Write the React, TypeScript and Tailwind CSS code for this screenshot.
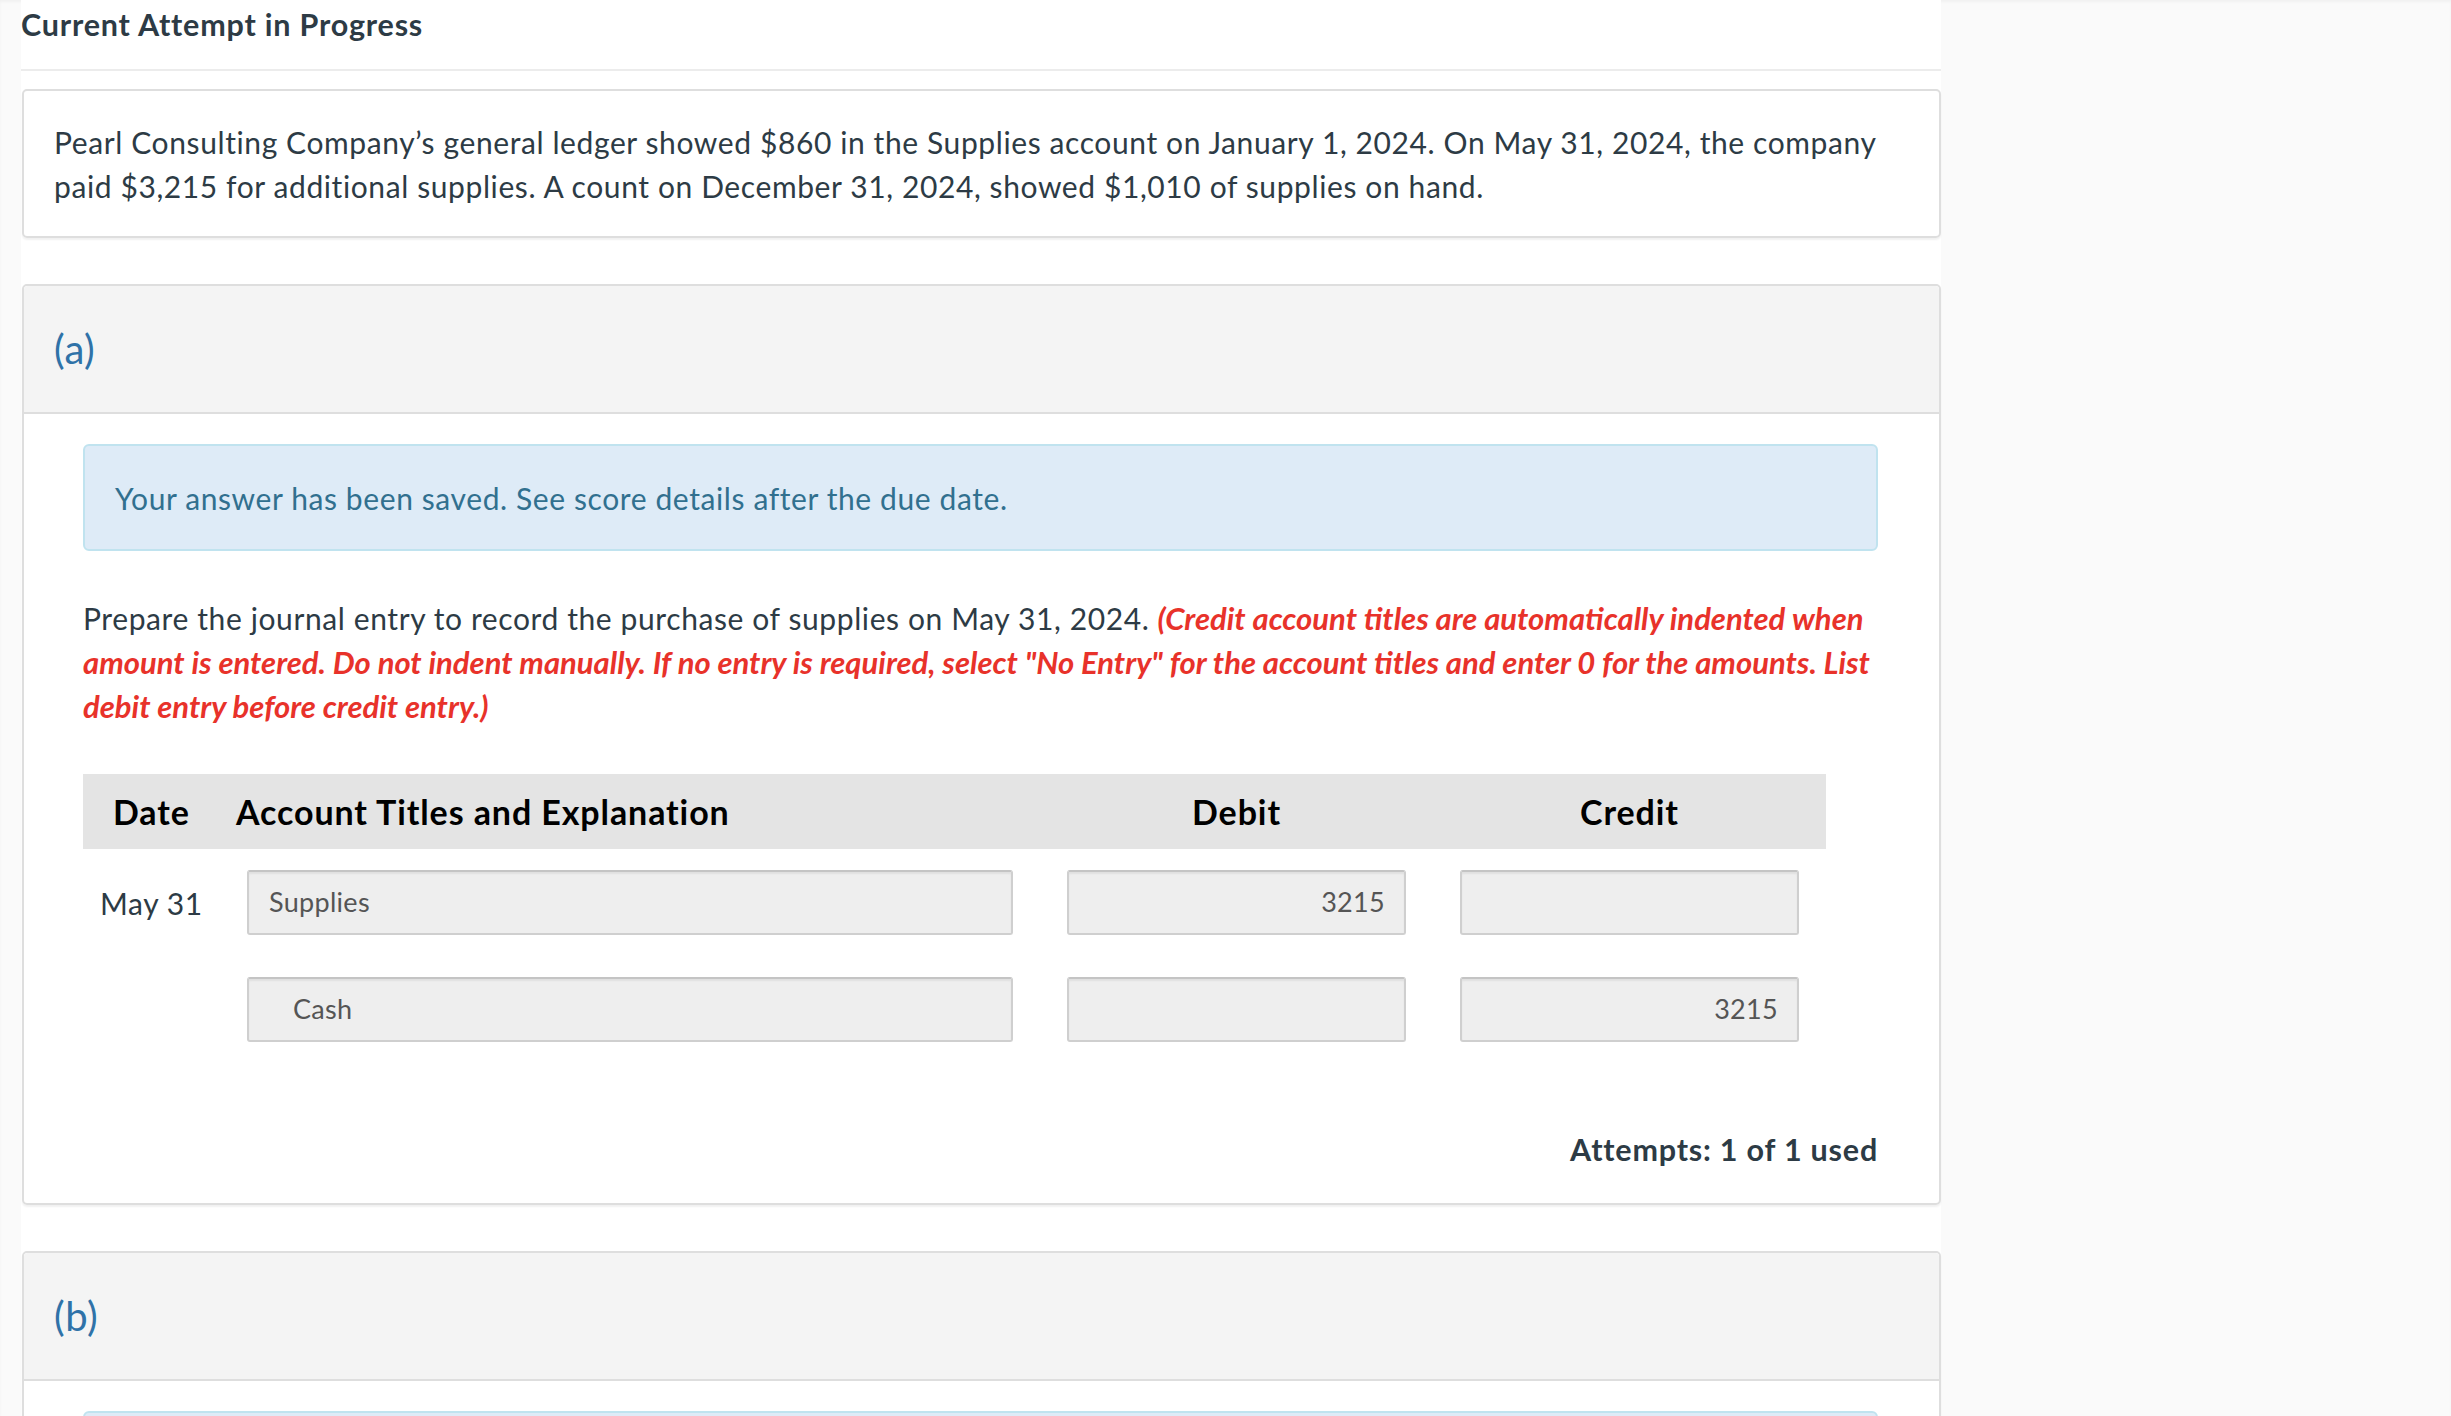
import React from "react";

function Input({ value, align = "left", indent = false, w }: { value: string; align?: "left" | "right"; indent?: boolean; w: string }) {
  return (
    <div
      className={`${w} h-[65px] shrink-0 flex items-center bg-[#eeeeee] border-2 border-[#cfcfcf] border-t-[#c4c4c4] rounded-[3px] shadow-[inset_0_2px_2px_rgba(0,0,0,0.06)] text-[27px] tracking-[0.3px] text-[#555555] ${
        align === "right" ? "justify-end pr-[19px]" : indent ? "pl-[44px]" : "pl-[20px]"
      }`}
    >
      {value}
    </div>
  );
}

function SectionHeader({ label }: { label: string }) {
  return (
    <div className="h-[128px] bg-[#f4f4f4] border-b-2 border-[#dedede] flex items-center pl-[30px] rounded-t-[4px]">
      <span className="text-[40px] tracking-[0.5px] leading-none text-[#2f72a8]">{label}</span>
    </div>
  );
}

const body = "text-[30px] tracking-[0.6px] leading-[44px]";
const red = "font-bold italic text-[#e8322a] text-[31px] tracking-[0px]";

export default function App() {
  return (
    <div className="min-h-screen bg-[#fafafa] font-[family-name:Lato,sans-serif] shadow-[inset_0_2px_3px_rgba(0,0,0,0.04)]">
      <div className="ml-[21px] w-[1920px] bg-white min-h-screen pb-[60px]">
        {/* Heading */}
        <div className="pt-[2px] pb-[23px] border-b-2 border-[#ececec]">
          <h1 className="text-[30.5px] tracking-[0.8px] leading-[44px] font-bold text-[#2d3b45]">Current Attempt in Progress</h1>
        </div>

        {/* Problem statement */}
        <div className="mt-[18px] ml-[1px] border-2 border-[#dedede] rounded-[5px] shadow-[0_2px_2px_rgba(0,0,0,0.06)] pt-[29px] pb-[28px] px-[30px]">
          <p className={`${body} text-[#2d3b45]`}>
            <span className="block whitespace-nowrap">
              Pearl Consulting Company’s general ledger showed $860 in the Supplies account on January 1, 2024. On May 31, 2024, the company
            </span>
            <span className="block whitespace-nowrap">
              paid $3,215 for additional supplies. A count on December 31, 2024, showed $1,010 of supplies on hand.
            </span>
          </p>
        </div>

        {/* Section (a) */}
        <section className="mt-[46px] ml-[1px] border-2 border-[#dedede] rounded-[5px] shadow-[0_2px_2px_rgba(0,0,0,0.06)]">
          <SectionHeader label="(a)" />
          <div className="pt-[30px] pb-[32px] pl-[59px] pr-[61px]">
            <div className="h-[107px] flex items-center pl-[30px] bg-[#deebf7] border-2 border-[#c0e3ef] rounded-[6px]">
              <span className={`${body} text-[#31708f]`}>Your answer has been saved. See score details after the due date.</span>
            </div>

            <p className={`mt-[45px] ${body} text-[#2d3b45]`}>
              <span className="block whitespace-nowrap">
                Prepare the journal entry to record the purchase of supplies on May 31, 2024.{" "}
                <span className={red}>(Credit account titles are automatically indented when</span>
              </span>
              <span className={`block whitespace-nowrap ${red}`}>
                amount is entered. Do not indent manually. If no entry is required, select "No Entry" for the account titles and enter 0 for the amounts. List
              </span>
              <span className={`block whitespace-nowrap ${red}`}>debit entry before credit entry.)</span>
            </p>

            {/* Table */}
            <div className="mt-[46px] w-[1743px]">
              <div className="h-[75px] bg-[#e4e4e4] flex items-center text-[34px] tracking-[0.9px] font-bold text-black">
                <div className="w-[153px] pl-[30px] shrink-0">Date</div>
                <div className="w-[814px] shrink-0 whitespace-nowrap">Account Titles and Explanation</div>
                <div className="w-[373px] shrink-0 text-center">Debit</div>
                <div className="w-[20px] shrink-0" />
                <div className="w-[373px] shrink-0 text-center">Credit</div>
              </div>

              <div className="mt-[21px] flex items-center">
                <div className={`w-[164px] shrink-0 pl-[17px] ${body} text-[#2d3b45]`}>May 31</div>
                <Input w="w-[766px]" value="Supplies" />
                <div className="w-[54px] shrink-0" />
                <Input w="w-[339px]" value="3215" align="right" />
                <div className="w-[54px] shrink-0" />
                <Input w="w-[339px]" value="" />
              </div>

              <div className="mt-[42px] flex items-center">
                <div className="w-[164px] shrink-0" />
                <Input w="w-[766px]" value="Cash" indent />
                <div className="w-[54px] shrink-0" />
                <Input w="w-[339px]" value="" />
                <div className="w-[54px] shrink-0" />
                <Input w="w-[339px]" value="3215" align="right" />
              </div>
            </div>

            <div className="mt-[85px] text-right text-[30.5px] tracking-[0.8px] leading-[44px] font-bold text-[#2d3b45]">Attempts: 1 of 1 used</div>
          </div>
        </section>

        {/* Section (b) */}
        <section className="mt-[46px] ml-[1px] border-2 border-[#dedede] rounded-[5px] shadow-[0_2px_2px_rgba(0,0,0,0.06)]">
          <SectionHeader label="(b)" />
          <div className="pt-[30px] pb-[32px] pl-[59px] pr-[61px]">
            <div className="h-[107px] flex items-center pl-[30px] bg-[#deebf7] border-2 border-[#c0e3ef] rounded-[6px]">
              <span className={`${body} text-[#31708f]`}>Your answer has been saved. See score details after the due date.</span>
            </div>
          </div>
        </section>
      </div>
    </div>
  );
}
